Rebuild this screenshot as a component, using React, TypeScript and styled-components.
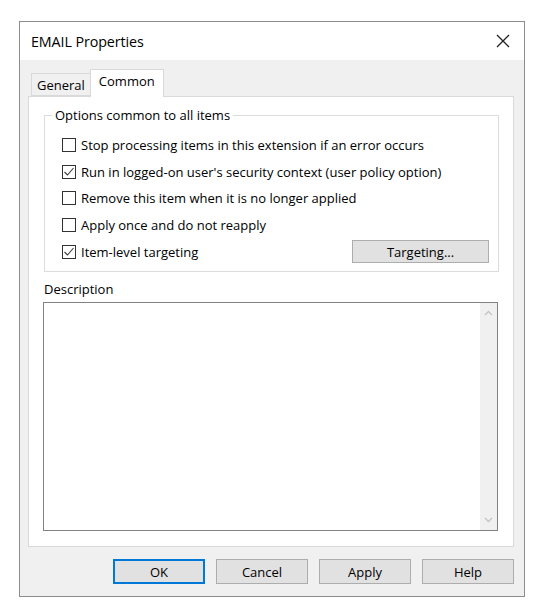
import React from 'react'
import styled, { createGlobalStyle } from 'styled-components'

const GlobalStyle = createGlobalStyle`
  html, body {
    margin: 0;
    padding: 0;
    background: #ffffff;
    font-family: "Open Sans", "Noto Sans", sans-serif;
    color: #000000;
  }
  * { box-sizing: border-box; }
`

const Page = styled.div`
  padding: 21px 0 0 19px;
`

const Dialog = styled.div`
  width: 506px;
  height: 576px;
  border: 1px solid #8c8c8c;
  display: flex;
  flex-direction: column;
  background: #f0f0f0;
`

const TitleBar = styled.div`
  height: 38px;
  background: #ffffff;
  display: flex;
  align-items: center;
  justify-content: space-between;
  padding: 0 12px 0 11px;
`

const Title = styled.span`
  font-size: 14.3px;
  letter-spacing: -0.1px;
`

const CloseButton = styled.div`
  width: 18px;
  height: 18px;
  display: flex;
  align-items: center;
  justify-content: center;
`

const Body = styled.div`
  flex: 1;
  display: flex;
  flex-direction: column;
  padding: 9px 10px 0 8px;
`

const TabStrip = styled.div`
  height: 27px;
  display: flex;
  align-items: flex-end;
  padding-left: 3px;
  position: relative;
  z-index: 1;
`

const Tab = styled.div<{ $active?: boolean }>`
  height: ${p => (p.$active ? '28px' : '23px')};
  margin-bottom: ${p => (p.$active ? '-1px' : '0')};
  padding: ${p => (p.$active ? '3px 8px 0 8px' : '3px 5px 0 5px')};
  border: 1px solid #d9d9d9;
  border-bottom: ${p => (p.$active ? 'none' : '1px solid #d9d9d9')};
  background: ${p => (p.$active ? '#ffffff' : '#f0f0f0')};
  font-size: 13px;
  line-height: 17px;
  margin-left: ${p => (p.$active ? '-1px' : '0')};
`

const Panel = styled.div`
  height: 451px;
  background: #ffffff;
  border: 1px solid #d9d9d9;
  padding: 9px 14px 0 15px;
  display: flex;
  flex-direction: column;
`

const GroupBox = styled.fieldset`
  margin: 0;
  height: 166px;
  border: 1px solid #dcdcdc;
  padding: 8px 9px 0 7px;
  display: flex;
  flex-direction: column;
`

const Legend = styled.legend`
  font-size: 13px;
  padding: 0 3px;
`

const Row = styled.div`
  height: 26.6px;
  display: flex;
  align-items: center;
  justify-content: space-between;
  padding-left: 10px;
`

const CheckLabel = styled.label`
  display: flex;
  align-items: center;
  gap: 5px;
  font-size: 13px;
`

const Box = styled.span`
  width: 14px;
  height: 14px;
  border: 1px solid #333333;
  background: #ffffff;
  display: flex;
  align-items: center;
  justify-content: center;
`

const Button = styled.button<{ $default?: boolean; $width?: number }>`
  width: ${p => p.$width ?? 92}px;
  height: 25px;
  background: #e1e1e1;
  border: ${p => (p.$default ? '2px solid #0078d7' : '1px solid #adadad')};
  font-family: inherit;
  font-size: 13px;
  color: #000000;
  padding: 0;
`

const TargetButton = styled(Button)`
  height: 23px;
`

const DescLabel = styled.div`
  font-size: 13px;
  margin-top: 5px;
  height: 24px;
  display: flex;
  align-items: center;
`

const TextArea = styled.div`
  margin-top: 1px;
  height: 229px;
  width: 455px;
  margin-left: -1px;
  border: 1px solid #828282;
  background: #ffffff;
  display: flex;
  justify-content: flex-end;
`

const ScrollTrack = styled.div`
  width: 17px;
  background: #f0f0f0;
  display: flex;
  flex-direction: column;
  justify-content: space-between;
  align-items: center;
  padding: 7px 0;
`

const ButtonBar = styled.div`
  display: flex;
  justify-content: flex-end;
  gap: 11px;
  padding: 12px 0 0 0;
`

const Check = ({ checked }: { checked?: boolean }) => (
  <Box>
    {checked && (
      <svg width="12" height="12" viewBox="0 0 12 12">
        <path d="M1.5 6 L4.5 9 L10.5 2" fill="none" stroke="#3a3a3a" strokeWidth="1.1" />
      </svg>
    )}
  </Box>
)

const Chevron = ({ up }: { up?: boolean }) => (
  <svg width="9" height="6" viewBox="0 0 9 6">
    <path d={up ? 'M1 5 L4.5 1.5 L8 5' : 'M1 1 L4.5 4.5 L8 1'} fill="none" stroke="#c4c4c4" strokeWidth="1.3" />
  </svg>
)

const options = [
  { text: 'Stop processing items in this extension if an error occurs', checked: false },
  { text: "Run in logged-on user's security context (user policy option)", checked: true },
  { text: 'Remove this item when it is no longer applied', checked: false },
  { text: 'Apply once and do not reapply', checked: false },
  { text: 'Item-level targeting', checked: true },
]

export default function App() {
  return (
    <Page>
      <GlobalStyle />
      <Dialog>
        <TitleBar>
          <Title>EMAIL Properties</Title>
          <CloseButton>
            <svg width="14" height="14" viewBox="0 0 14 14">
              <path d="M1 1 L13 13 M13 1 L1 13" stroke="#222" strokeWidth="1.3" />
            </svg>
          </CloseButton>
        </TitleBar>
        <Body>
          <TabStrip>
            <Tab>General</Tab>
            <Tab $active>Common</Tab>
          </TabStrip>
          <Panel>
            <GroupBox>
              <Legend>Options common to all items</Legend>
              {options.map((o, i) => (
                <Row key={i}>
                  <CheckLabel>
                    <Check checked={o.checked} />
                    {o.text}
                  </CheckLabel>
                  {i === options.length - 1 && <TargetButton $width={137}>Targeting...</TargetButton>}
                </Row>
              ))}
            </GroupBox>
            <DescLabel>Description</DescLabel>
            <TextArea>
              <ScrollTrack>
                <Chevron up />
                <Chevron />
              </ScrollTrack>
            </TextArea>
          </Panel>
          <ButtonBar>
            <Button $default>OK</Button>
            <Button>Cancel</Button>
            <Button>Apply</Button>
            <Button>Help</Button>
          </ButtonBar>
        </Body>
      </Dialog>
    </Page>
  )
}
